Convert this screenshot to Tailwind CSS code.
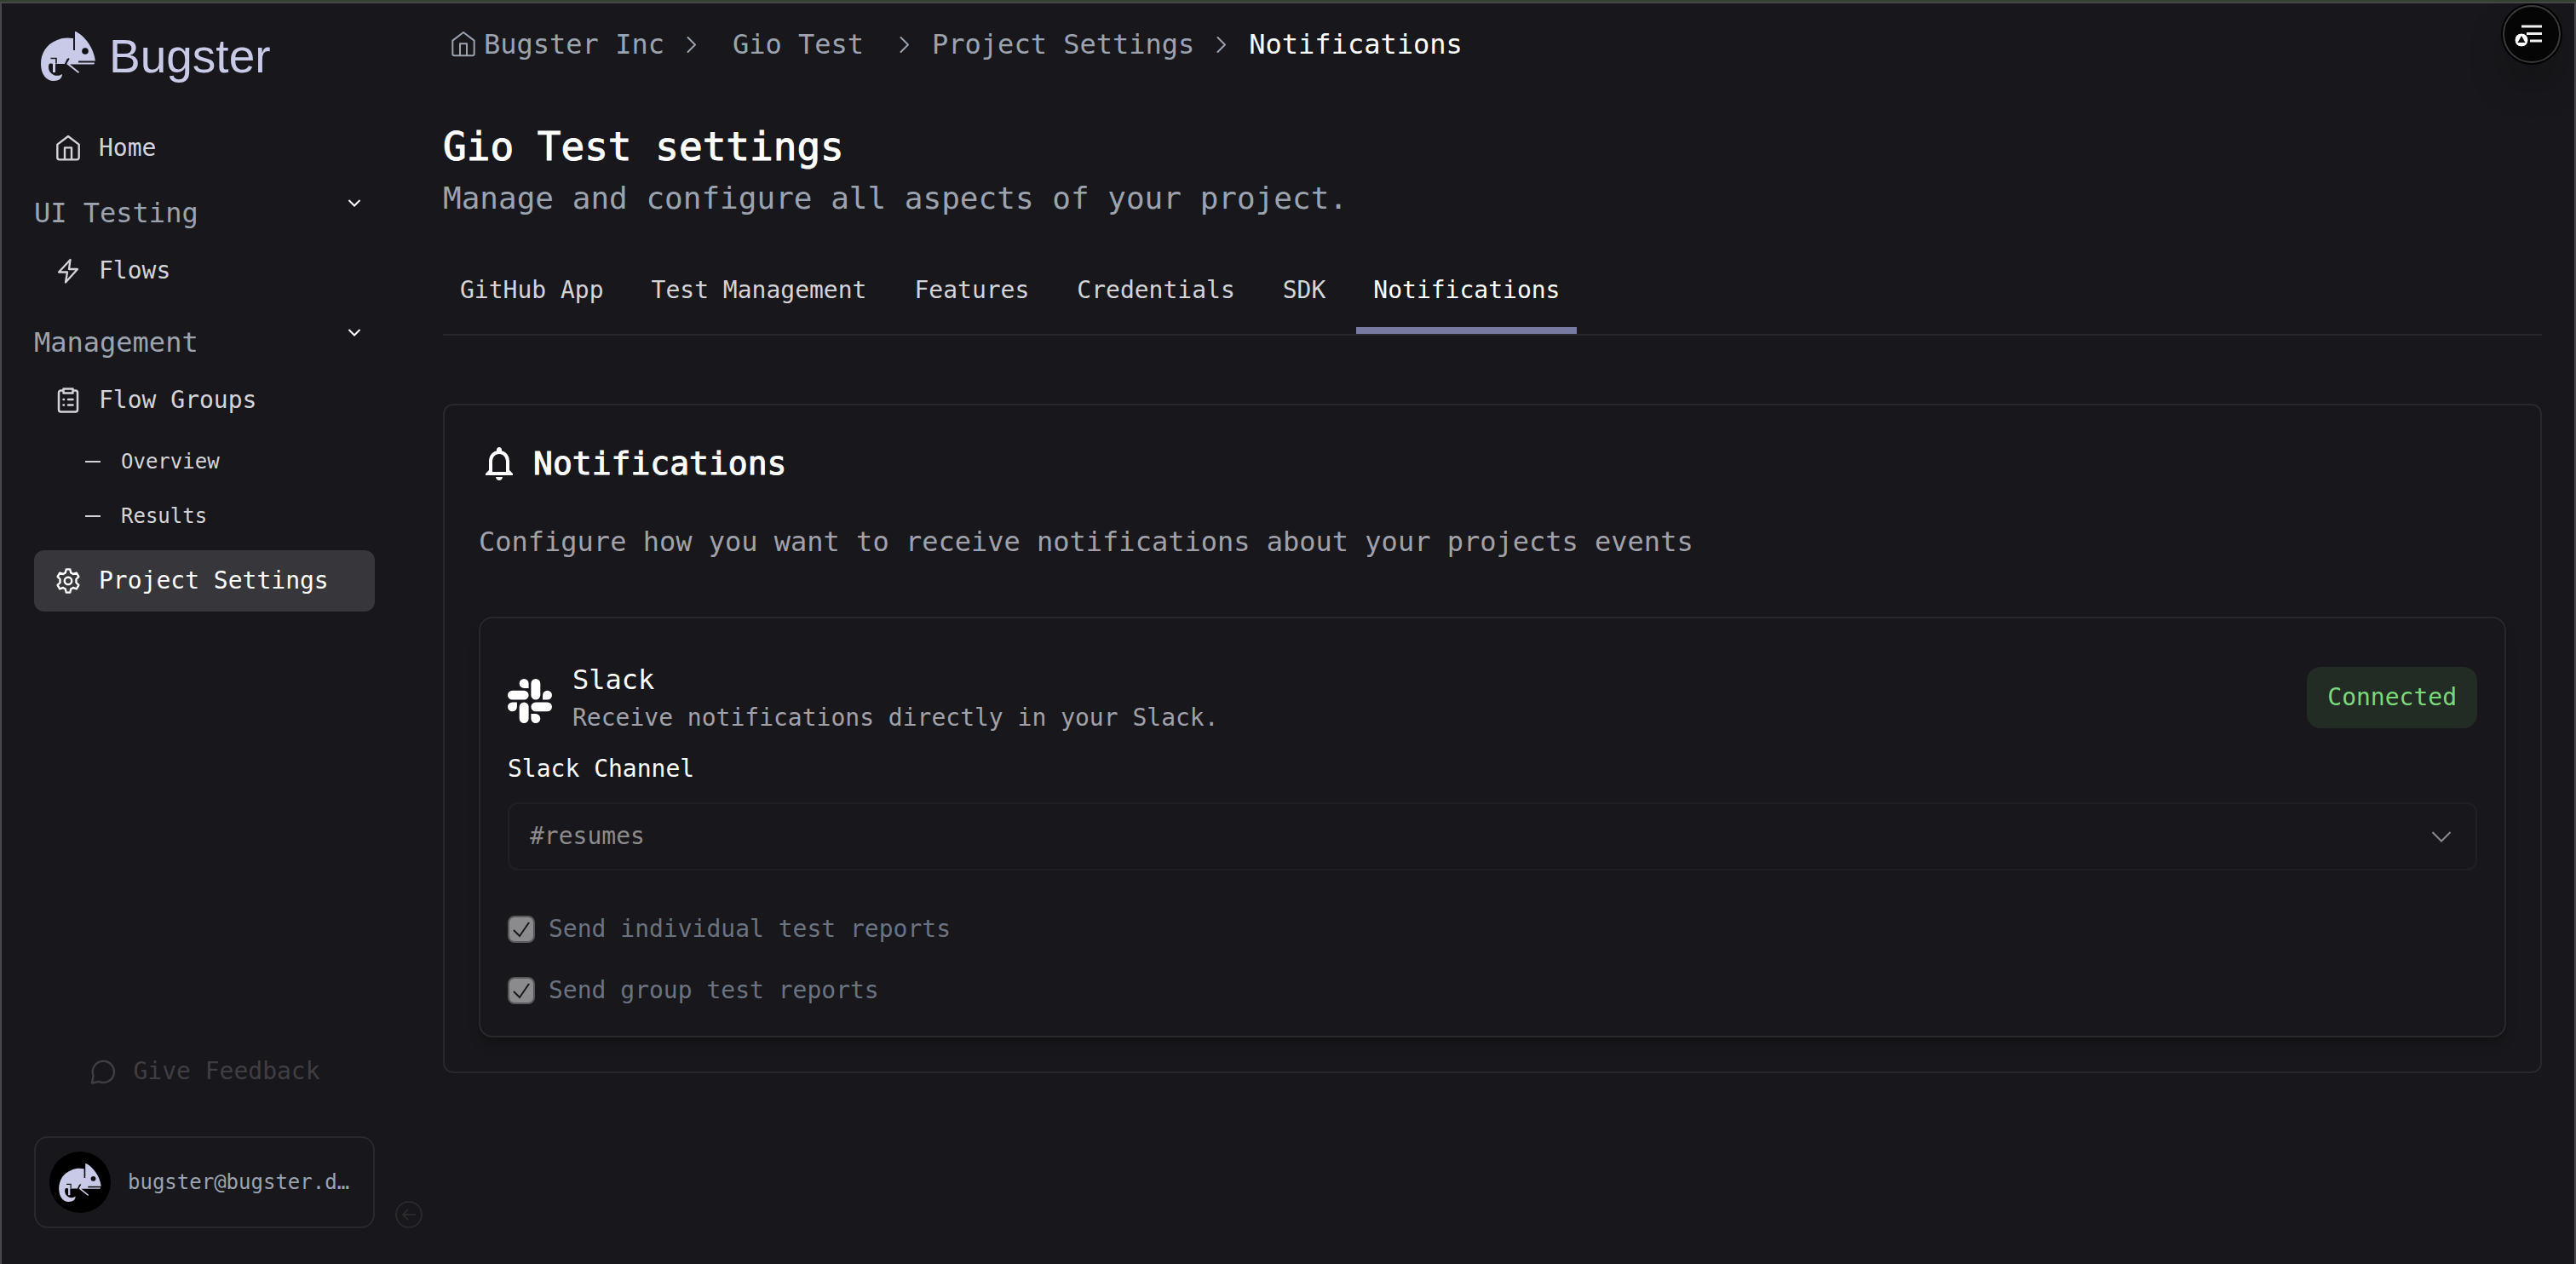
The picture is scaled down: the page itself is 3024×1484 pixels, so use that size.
<!DOCTYPE html>
<html lang="en">
<head>
<meta charset="utf-8">
<title>Project Settings – Bugster</title>
<script src="https://cdn.jsdelivr.net/npm/@tailwindcss/browser@4"></script>
</head>
<body class="bg-[#18171b] text-white">
<svg class="hidden" aria-hidden="true">
  <symbol id="chameleon" viewBox="0 0 64 58">
    <path fill="#c8cae8" d="M38 8C32 7 25 7 19 10C6 15 0 26 0 38C0 50 6 58 15 58C21 58 25 55 25 50C22 52 18 52.500 15 51C11 49 9 46 9 42C9 38 10 37 12 37.500L14 38V48H17V38H28L31 31.500L32.500 33L30 38L44 49L45 47.500L34 38.500H61.500C62.500 38.500 63 37.500 63 36.500H44V34.500H63.800C63.500 30 62 26 60 21C56 12 49 4 41 0H40V22H38Z"/>
    <path stroke="#18171b" stroke-width="1.600" fill="none" d="M11.500 31.500H18V37.500M29 38L33 31.500"/>
    <circle cx="52" cy="23" r="3.800" fill="#101014"/>
  </symbol>
  <symbol id="home" viewBox="0 0 24 24">
    <path fill="none" stroke="currentColor" stroke-linejoin="round" stroke-linecap="round" d="M2.500 8.700 12 1.500l9.500 7.200v11.600a1.700 1.700 0 0 1-1.700 1.700H4.200a1.700 1.700 0 0 1-1.700-1.700ZM9 22V11.500h6V22"/>
  </symbol>
  <symbol id="chevron-right" viewBox="0 0 32 32">
    <path fill="none" stroke="currentColor" stroke-width="2" stroke-linecap="round" stroke-linejoin="round" d="M11.500 8 20 16.500 11.500 25"/>
  </symbol>
  <symbol id="chevron-down" viewBox="0 0 16 16">
    <path fill="none" stroke="currentColor" stroke-width="2" d="m1.500 5 6.500 6.500L14.500 5"/>
  </symbol>
</svg>
<div class="min-h-screen border-t-2 border-[#34402f] flex font-['DejaVu_Sans_Mono',monospace]">
<div class="flex-1 min-w-0 flex border-2 border-b-0 border-[#48474a]">

  <aside class="w-[476px] shrink-0 pl-[38px] pr-[38px] pt-7 pb-[42px] flex flex-col">
    <a href="#" class="flex items-center gap-4 pl-2 h-[68px]">
      <svg class="w-16 h-[58px]"><use href="#chameleon"/></svg>
      <span class="font-['Liberation_Sans',sans-serif] text-[55px] leading-[70px] text-[#c8cae8]">Bugster</span>
    </a>
    <nav class="mt-[38px] text-[28px] leading-[42px] text-[#d4d4d8]">
      <a href="#" class="flex items-center gap-5 h-[72px] px-6">
        <svg class="size-8" stroke-width="1.800"><use href="#home"/></svg>Home
      </a>
      <button type="button" class="w-full h-[72px] pr-4 flex items-start justify-between">
        <span class="mt-4 text-[32px] leading-[48px] text-[#9ca3af]">UI Testing</span>
        <svg class="mt-5 size-4 text-white"><use href="#chevron-down"/></svg>
      </button>
      <a href="#" class="flex items-center gap-5 h-[72px] px-6">
        <svg class="size-8" viewBox="0 0 32 32" fill="none" stroke="currentColor" stroke-width="2.300" stroke-linejoin="round"><path d="M18.500 3 5 17.500h10L13 29.500 27 14H17Z"/></svg>Flows
      </a>
      <button type="button" class="mt-2 w-full h-[72px] pr-4 flex items-start justify-between">
        <span class="mt-4 text-[32px] leading-[48px] text-[#9ca3af]">Management</span>
        <svg class="mt-5 size-4 text-white"><use href="#chevron-down"/></svg>
      </button>
      <a href="#" class="flex items-center gap-5 h-[72px] px-6">
        <svg class="size-8" viewBox="0 0 32 32" fill="none" stroke="currentColor" stroke-width="2.500" stroke-linejoin="round" stroke-linecap="round"><path d="M10 4.500H7.500A2.500 2.500 0 0 0 5 7v20a2.500 2.500 0 0 0 2.500 2.500h17A2.500 2.500 0 0 0 27 27V7a2.500 2.500 0 0 0-2.500-2.500H22M10.500 2.500h11v5h-11ZM16 15h5.500M16 21.500h5.500M10.500 15h.5M10.500 21.500h.5"/></svg>Flow Groups
      </a>
      <div class="mt-1 mb-2 text-[24px]">
        <a href="#" class="flex items-center gap-6 h-16 pl-[60px]"><span class="w-[18px] h-[2px] bg-current"></span>Overview</a>
        <a href="#" class="flex items-center gap-6 h-16 pl-[60px]"><span class="w-[18px] h-[2px] bg-current"></span>Results</a>
      </div>
      <a href="#" aria-current="page" class="flex items-center gap-5 h-[72px] px-6 rounded-xl bg-[#37363a] text-white">
        <svg class="size-8" viewBox="0 0 24 24" fill="none" stroke="currentColor" stroke-width="1.800" stroke-linejoin="round"><path d="M10.300 1.800h3.400l.7 3 2 1.200 3-1 1.900 3.300-2.200 2.200v3l2.200 2.200-1.900 3.300-3-1-2 1.200-.7 3h-3.400l-.7-3-2-1.200-3 1-1.900-3.300 2.200-2.200v-3L2.700 8.300 4.600 5l3 1 2-1.200Z"/><circle cx="12" cy="12" r="3.200"/></svg>Project Settings
      </a>
    </nav>
    <button type="button" class="mt-auto h-[72px] flex items-center justify-center gap-5 text-[28px] leading-[42px] text-[#3f3e43]">
      <svg class="size-8" viewBox="0 0 32 32" fill="none" stroke="currentColor" stroke-width="2.400" stroke-linejoin="round"><path d="M4 29.500l1.600-8.500A12.600 12.600 0 1 1 12 27.800Z"/></svg>Give Feedback
    </button>
    <div class="mt-10 flex items-end gap-6 -mr-[38px]">
      <button type="button" class="w-[400px] shrink-0 h-[108px] border-2 border-[#29292c] rounded-2xl px-4 flex items-center gap-5 text-[24px] leading-8 text-[#9ca3af]">
        <span class="size-[72px] shrink-0 rounded-full bg-black flex items-center justify-center"><svg class="w-[50px] h-[45px]"><use href="#chameleon"/></svg></span>
        <span class="whitespace-nowrap">bugster@bugster.d…</span>
      </button>
      <button type="button" aria-label="Collapse sidebar" class="size-8 shrink-0 text-[#29292c]">
        <svg class="size-8" viewBox="0 0 32 32" fill="none" stroke="currentColor" stroke-width="2" stroke-linecap="round" stroke-linejoin="round"><circle cx="16" cy="16" r="15"/><path d="M23 16H9M14.500 10.500 9 16l5.500 5.500"/></svg>
      </button>
    </div>
  </aside>

  <main class="flex-1 min-w-0 pl-[42px] pr-[38px] pt-6">
    <nav aria-label="Breadcrumb" class="pl-2 flex items-center gap-4 text-[32px] leading-[48px] text-[#9ca3af] whitespace-nowrap">
      <a href="#" class="flex items-center gap-2"><svg class="size-8" stroke-width="1.500"><use href="#home"/></svg>Bugster Inc</a>
      <svg class="size-8"><use href="#chevron-right"/></svg>
      <a href="#" class="px-4">Gio Test</a>
      <svg class="size-8"><use href="#chevron-right"/></svg>
      <a href="#">Project Settings</a>
      <svg class="size-8"><use href="#chevron-right"/></svg>
      <span aria-current="page" class="text-white">Notifications</span>
    </nav>

    <h1 class="mt-16 text-[46px] leading-[64px] [-webkit-text-stroke:1px_white]">Gio Test settings</h1>
    <p class="text-[36px] leading-[58px] text-[#9ca3af]">Manage and configure all aspects of your project.</p>

    <div role="tablist" class="mt-[34px] h-[98px] border-b-2 border-[#29292c] flex gap-4 text-[28px] leading-[42px] text-[#d4d4d8]">
      <button type="button" role="tab" class="px-5 pt-6 pb-[30px]">GitHub App</button>
      <button type="button" role="tab" class="px-5 pt-6 pb-[30px]">Test Management</button>
      <button type="button" role="tab" class="px-5 pt-6 pb-[30px]">Features</button>
      <button type="button" role="tab" class="px-5 pt-6 pb-[30px]">Credentials</button>
      <button type="button" role="tab" class="px-5 pt-6 pb-[30px]">SDK</button>
      <button type="button" role="tab" aria-selected="true" class="px-5 pt-6 pb-[22px] border-b-8 border-[#777ba2] text-white">Notifications</button>
    </div>

    <section class="mt-20 border-2 border-[#29292c] rounded-xl p-10">
      <h2 class="flex items-center gap-4 text-[38px] leading-[56px] [-webkit-text-stroke:1px_white]">
        <svg class="size-12" viewBox="0 0 24 24" fill="currentColor"><path d="M12 22c1.100 0 2-.9 2-2h-4c0 1.100.9 2 2 2zm6-6v-5c0-3.070-1.630-5.640-4.500-6.320V4c0-.83-.67-1.500-1.500-1.500s-1.500.67-1.500 1.500v.68C7.640 5.360 6 7.920 6 11v5l-2 2v1h16v-1l-2-2zm-2 1H8v-6c0-2.480 1.510-4.500 4-4.500s4 2.020 4 4.500v6z"/></svg>
        Notifications
      </h2>
      <p class="mt-10 text-[32px] leading-[48px] text-[#a1a1aa]">Configure how you want to receive notifications about your projects events</p>

      <div class="mt-16 border-2 border-[#29292c] rounded-2xl px-8 pt-12 pb-8 shadow-lg shadow-black/20">
        <div class="flex items-center gap-6">
          <svg class="mt-2 size-[52px] shrink-0" viewBox="0 0 24 24" fill="currentColor"><path d="M5.042 15.165a2.528 2.528 0 0 1-2.520 2.523A2.528 2.528 0 0 1 0 15.165a2.527 2.527 0 0 1 2.522-2.520h2.520v2.520zM6.313 15.165a2.527 2.527 0 0 1 2.521-2.520 2.527 2.527 0 0 1 2.521 2.520v6.313A2.528 2.528 0 0 1 8.834 24a2.528 2.528 0 0 1-2.521-2.522v-6.313zM8.834 5.042a2.528 2.528 0 0 1-2.521-2.520A2.528 2.528 0 0 1 8.834 0a2.528 2.528 0 0 1 2.521 2.522v2.520H8.834zM8.834 6.313a2.528 2.528 0 0 1 2.521 2.521 2.528 2.528 0 0 1-2.521 2.521H2.522A2.528 2.528 0 0 1 0 8.834a2.528 2.528 0 0 1 2.522-2.521h6.312zM18.956 8.834a2.528 2.528 0 0 1 2.522-2.521A2.528 2.528 0 0 1 24 8.834a2.528 2.528 0 0 1-2.522 2.521h-2.522V8.834zM17.688 8.834a2.528 2.528 0 0 1-2.523 2.521 2.527 2.527 0 0 1-2.520-2.521V2.522A2.527 2.527 0 0 1 15.165 0a2.528 2.528 0 0 1 2.523 2.522v6.312zM15.165 18.956a2.528 2.528 0 0 1 2.523 2.522A2.528 2.528 0 0 1 15.165 24a2.527 2.527 0 0 1-2.520-2.522v-2.522h2.520zM15.165 17.688a2.527 2.527 0 0 1-2.520-2.523 2.526 2.526 0 0 1 2.520-2.520h6.313A2.527 2.527 0 0 1 24 15.165a2.528 2.528 0 0 1-2.522 2.523h-6.313z"/></svg>
          <div class="flex-1 min-w-0">
            <h3 class="text-[32px] leading-[48px]">Slack</h3>
            <p class="text-[28px] leading-[42px] text-[#a1a1aa]">Receive notifications directly in your Slack.</p>
          </div>
          <span class="h-[72px] rounded-2xl bg-[#222b24] text-[#7bd87b] px-6 flex items-center text-[28px] leading-[42px]">Connected</span>
        </div>

        <label for="channel" class="block mt-[18px] text-[28px] leading-[42px]">Slack Channel</label>
        <div class="mt-[18px] grid items-center">
          <select id="channel" disabled class="col-start-1 row-start-1 w-full h-20 appearance-none rounded-xl border-2 border-[#202023] px-6 text-[28px] leading-[42px] text-[#8b8b8d]">
            <option>#resumes</option>
          </select>
          <svg class="col-start-1 row-start-1 justify-self-end mr-[30px] w-6 h-4 text-[#8b8b8d] pointer-events-none" viewBox="0 0 24 16" fill="none" stroke="currentColor" stroke-width="2"><path d="M1.500 3 12 13.500 22.500 3"/></svg>
        </div>

        <div class="mt-12 flex flex-col gap-[30px] text-[28px] leading-[42px] text-[#6b7280]">
          <label class="flex items-center gap-4">
            <span class="grid size-8">
              <input type="checkbox" checked disabled class="col-start-1 row-start-1 appearance-none size-8 rounded-lg border-2 border-[#58585a] bg-[#8b8b8d]">
              <svg class="col-start-1 row-start-1 size-8 text-[#18171b] pointer-events-none" viewBox="0 0 32 32" fill="none" stroke="currentColor" stroke-width="2"><path d="M7 17 14 24 25 8"/></svg>
            </span>Send individual test reports
          </label>
          <label class="flex items-center gap-4">
            <span class="grid size-8">
              <input type="checkbox" checked disabled class="col-start-1 row-start-1 appearance-none size-8 rounded-lg border-2 border-[#58585a] bg-[#8b8b8d]">
              <svg class="col-start-1 row-start-1 size-8 text-[#18171b] pointer-events-none" viewBox="0 0 32 32" fill="none" stroke="currentColor" stroke-width="2"><path d="M7 17 14 24 25 8"/></svg>
            </span>Send group test reports
          </label>
        </div>
      </div>
    </section>
  </main>
</div>
</div>

<!-- Floating tools button -->
<button type="button" aria-label="Open tools" class="fixed top-1 right-4 size-[72px] rounded-full bg-black border-2 border-black shadow-2xl shadow-black/40">
  <svg class="size-full" viewBox="2 2 68 68" fill="none"><circle cx="36" cy="36" r="33" stroke="#3a3a3a" stroke-width="2" fill="#050505"/><path stroke="#f0f0f0" stroke-width="3" d="M24 27h24M30 35.500h18M34 44h14"/><circle cx="24" cy="43" r="8" fill="#fff" stroke="#050505"/><path fill="#111" d="m24 38 4.500 8h-9Z"/></svg>
</button>
</body>
</html>
